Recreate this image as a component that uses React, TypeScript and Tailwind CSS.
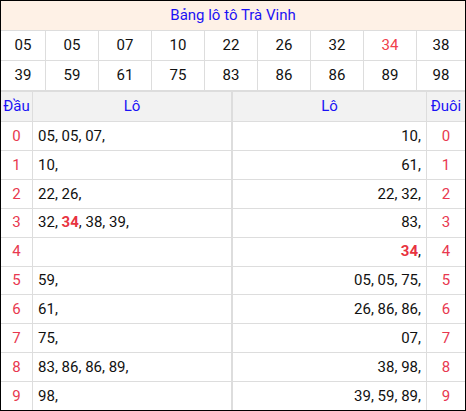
import React from 'react';

const top = [
  ['05', '05', '07', '10', '22', '26', '32', '34', '38'],
  ['39', '59', '61', '75', '83', '86', '86', '89', '98'],
];

const rows = [
  { dau: ['05', '05', '07'], duoi: ['10'] },
  { dau: ['10'], duoi: ['61'] },
  { dau: ['22', '26'], duoi: ['22', '32'] },
  { dau: ['32', '34', '38', '39'], duoi: ['83'] },
  { dau: [], duoi: ['34'] },
  { dau: ['59'], duoi: ['05', '05', '75'] },
  { dau: ['61'], duoi: ['26', '86', '86'] },
  { dau: ['75'], duoi: ['07'] },
  { dau: ['83', '86', '86', '89'], duoi: ['38', '98'] },
  { dau: ['98'], duoi: ['39', '59', '89'] },
];

const Nums = ({ list }: { list: string[] }) => (
  <span className="whitespace-nowrap">
    {list.map((n, i) => (
      <React.Fragment key={i}>
        {i > 0 && ' '}
        {n === '34' ? <b className="font-bold text-[#e8333f]">{n}</b> : n},
      </React.Fragment>
    ))}
  </span>
);

const App = () => {
  return (
    <div
      className="w-[466px] h-[411px] border border-black bg-white flex flex-col overflow-hidden text-[15px] text-[#111]"
      style={{ fontFamily: 'Roboto, "Liberation Sans", sans-serif' }}
    >
      <div className="h-[30px] shrink-0 bg-[#fef1e6] border-b border-[#dddddd] flex items-center justify-center text-[#1b12f5]">
        Bảng lô tô Trà Vinh
      </div>

      {top.map((row, r) => (
        <div
          key={r}
          className="h-[30px] shrink-0 grid grid-cols-[45px_repeat(7,53px)_1fr] border-b border-[#dddddd]"
        >
          {row.map((n, i) => (
            <div
              key={i}
              className={`flex items-center justify-center ${i < 8 ? 'border-r border-[#dddddd]' : ''} ${r === 0 && i === 7 ? 'text-[#f0404c]' : ''}`}
            >
              {n}
            </div>
          ))}
        </div>
      ))}

      <div className="flex-1 flex border-t border-[#dddddd]">
        <div className="w-[231px] flex flex-col border-r border-[#dddddd]">
          <div className="h-[30px] shrink-0 flex bg-[#f2f2f2] border-b border-[#dddddd] text-[#1b12f5]">
            <div className="w-[32px] flex items-center justify-center border-r border-[#dddddd] overflow-visible whitespace-nowrap">
              Đầu
            </div>
            <div className="flex-1 flex items-center justify-center">Lô</div>
          </div>
          {rows.map((row, i) => (
            <div key={i} className="flex-1 flex border-b border-[#dddddd] last:border-b-0">
              <div className="w-[32px] flex items-center justify-center border-r border-[#dddddd] text-[#e8384f]">
                {i}
              </div>
              <div className="flex-1 flex items-center pl-[5px]">
                <Nums list={row.dau} />
              </div>
            </div>
          ))}
        </div>

        <div className="flex-1 flex flex-col border-l border-[#dddddd]">
          <div className="h-[30px] shrink-0 flex bg-[#f2f2f2] border-b border-[#dddddd] text-[#1b12f5]">
            <div className="flex-1 flex items-center justify-center border-r border-[#dddddd]">Lô</div>
            <div className="w-[38px] flex items-center justify-center whitespace-nowrap">Đuôi</div>
          </div>
          {rows.map((row, i) => (
            <div key={i} className="flex-1 flex border-b border-[#dddddd] last:border-b-0">
              <div className="flex-1 flex items-center justify-end pr-[5px] border-r border-[#dddddd]">
                <Nums list={row.duoi} />
              </div>
              <div className="w-[38px] flex items-center justify-center text-[#e8384f]">{i}</div>
            </div>
          ))}
        </div>
      </div>
    </div>
  );
};

export default App;
